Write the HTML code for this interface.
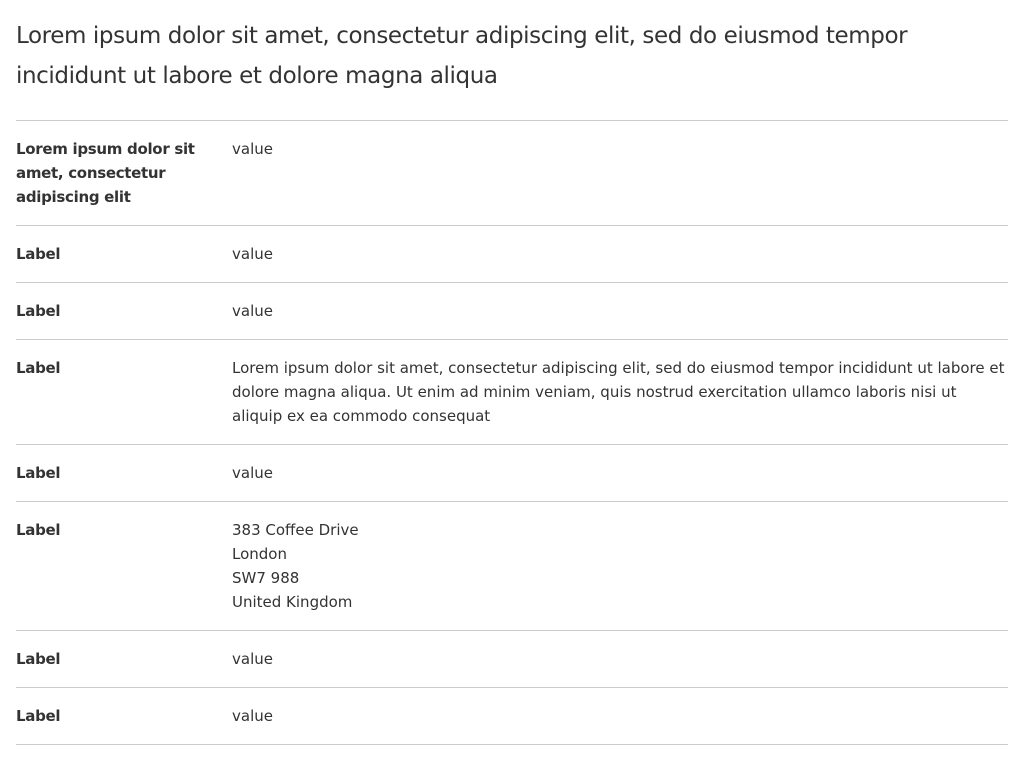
<!DOCTYPE html>
<html><head><meta charset="utf-8"><style>
body{margin:0;background:#fff;color:#333;font-family:"DejaVu Sans","Liberation Sans",sans-serif;}
.wrap{padding:16px 16px 0 16px;}
h1{margin:0;font-weight:normal;font-size:23px;line-height:40px;height:104px;color:#333;letter-spacing:-0.4px}
table{border-collapse:collapse;table-layout:fixed;width:992px;border-top:1px solid #ccc;font-size:15px;letter-spacing:0px}
td{vertical-align:top;padding:16px 0;line-height:24px;border-bottom:1px solid #ccc;white-space:nowrap}
td.l{font-weight:bold;font-size:15px;letter-spacing:-0.3px}
</style></head><body><div class="wrap">
<h1>Lorem ipsum dolor sit amet, consectetur adipiscing elit, sed do eiusmod tempor<br>incididunt ut labore et dolore magna aliqua</h1>
<table><colgroup><col style="width:216px"><col style="width:776px"></colgroup>
<tr><td class="l">Lorem ipsum dolor sit<br>amet, consectetur<br>adipiscing elit</td><td>value</td></tr>
<tr><td class="l">Label</td><td>value</td></tr>
<tr><td class="l">Label</td><td>value</td></tr>
<tr><td class="l">Label</td><td>Lorem ipsum dolor sit amet, consectetur adipiscing elit, sed do eiusmod tempor incididunt ut labore et<br>dolore magna aliqua. Ut enim ad minim veniam, quis nostrud exercitation ullamco laboris nisi ut<br>aliquip ex ea commodo consequat</td></tr>
<tr><td class="l">Label</td><td>value</td></tr>
<tr><td class="l">Label</td><td>383 Coffee Drive<br>London<br>SW7 988<br>United Kingdom</td></tr>
<tr><td class="l">Label</td><td>value</td></tr>
<tr><td class="l">Label</td><td>value</td></tr>
</table></div></body></html>
